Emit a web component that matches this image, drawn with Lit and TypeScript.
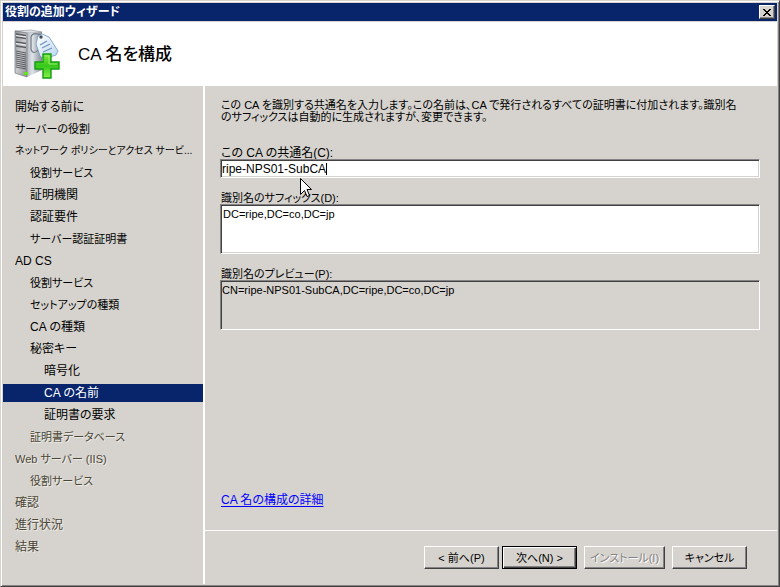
import { LitElement, html, css, svg } from "lit";
import { customElement, property, state } from "lit/decorators.js";
import { classMap } from "lit/directives/class-map.js";

interface Step {
  label: string;
  level: 0 | 1 | 2;
  size?: "small" | "tiny";
  current?: boolean;
  disabled?: boolean;
}

const STEPS: Step[] = [
  { label: "開始する前に", level: 0 },
  { label: "サーバーの役割", level: 0, size: "small" },
  { label: "ネットワーク ポリシーとアクセス サービ...", level: 0, size: "tiny" },
  { label: "役割サービス", level: 1, size: "small" },
  { label: "証明機関", level: 1 },
  { label: "認証要件", level: 1 },
  { label: "サーバー認証証明書", level: 1, size: "small" },
  { label: "AD CS", level: 0 },
  { label: "役割サービス", level: 1, size: "small" },
  { label: "セットアップの種類", level: 1, size: "small" },
  { label: "CA の種類", level: 1 },
  { label: "秘密キー", level: 1 },
  { label: "暗号化", level: 2 },
  { label: "CA の名前", level: 2, current: true },
  { label: "証明書の要求", level: 2 },
  { label: "証明書データベース", level: 1, size: "small", disabled: true },
  { label: "Web サーバー (IIS)", level: 0, size: "small", disabled: true },
  { label: "役割サービス", level: 1, size: "small", disabled: true },
  { label: "確認", level: 0, disabled: true },
  { label: "進行状況", level: 0, disabled: true },
  { label: "結果", level: 0, disabled: true },
];

@customElement("server-role-icon")
export class ServerRoleIcon extends LitElement {
  static styles = css`
    :host { display: block; flex: none; }
    .art { display: block; }
  `;

  render() {
    const vents = [0, 1, 2, 3, 4, 5, 6, 7, 8];
    return html`<svg class="art" width="48" height="52" viewBox="0 0 48 52" aria-hidden="true">
      <defs>
        <linearGradient id="front" x1="0" y1="0" x2="1" y2="1">
          <stop offset="0" stop-color="#8f9296" /><stop offset="0.5" stop-color="#c9cbce" /><stop offset="1" stop-color="#8b8e92" />
        </linearGradient>
        <linearGradient id="side" x1="0" y1="0" x2="1" y2="0">
          <stop offset="0" stop-color="#b4b9c0" /><stop offset="0.35" stop-color="#dfe3e9" /><stop offset="1" stop-color="#848b95" />
        </linearGradient>
        <linearGradient id="tag" x1="0" y1="0" x2="1" y2="1">
          <stop offset="0" stop-color="#ffffff" /><stop offset="1" stop-color="#b9d6ef" />
        </linearGradient>
        <linearGradient id="plus" x1="0" y1="0" x2="0" y2="1">
          <stop offset="0" stop-color="#7fe63f" /><stop offset="0.5" stop-color="#35c81b" /><stop offset="1" stop-color="#8cf04f" />
        </linearGradient>
      </defs>
      <path d="M1 2 L17 1 L28 3 L13 4 Z" fill="#dfe2e6" stroke="#8b8f95" stroke-width="0.6" />
      <path d="M13 4 L28 3 L28 41 L13 48 Z" fill="url(#side)" />
      <path d="M1 2 L13 4 L13 48 L1 44 Z" fill="url(#front)" stroke="#75787d" stroke-width="0.7" />
      <path d="M2 5 L12 6.500 M2 8 L12 9.500 M2 13 L12 14.500 M2 17 L12 18.500" stroke="#595c61" stroke-width="1.400" />
      <path d="M2 6.500 L12 8 M2 14.500 L12 16" stroke="#eceef0" stroke-width="1" />
      ${vents.map((n) => svg`<path d=${`M2 ${22 + n * 2} L12 ${24 + n * 2}`} stroke="#505359" stroke-width="0.9" />`)}
      <rect x="10" y="43" width="4" height="3" fill="#62e31c" />
      <path d="M29 8 C24 3 18 4 17 8 L17 20 C18 25 22 24 24 21" fill="none" stroke="#747c87" stroke-width="1.200" />
      <path d="M24 7 L28 5 L35 8 L44 22 L42 26 L30 30 L26 27 L22 15 Z" fill="url(#tag)" stroke="#7196bf" stroke-width="0.8" />
      <circle cx="27" cy="8" r="1.700" fill="#454b56" />
      <path d="M26 16 L33 12 M28 19 L36 15 M29 23 L38 19" stroke="#6f91ba" stroke-width="1.200" />
      <path d="M29 25 H37 V33 H45 V40 H37 V49 H29 V40 H21 V33 H29 Z" fill="url(#plus)" stroke="#159c12" stroke-width="1.400" />
      <path d="M31 27 H35 V35 H43" fill="none" stroke="#b6f58c" stroke-width="1" opacity="0.7" />
    </svg>`;
  }
}

@customElement("wizard-steps")
export class WizardSteps extends LitElement {
  @property({ attribute: false }) steps: Step[] = [];

  static styles = css`
    :host { display: block; }
    .list {
      list-style: none;
      margin: 0;
      padding: 12px 0 0;
      display: flex;
      flex-direction: column;
      gap: 4px;
    }
    .step {
      line-height: 18px;
      padding: 0 8px 0 12px;
      white-space: nowrap;
    }
    .small { font-size: 11px; }
    .tiny { font-size: 10px; }
    .level-1 { padding-left: 27px; }
    .level-2 { padding-left: 41px; }
    .current { background: #08246b; color: #fff; }
    .disabled { color: #4a4636; text-shadow: 1px 1px #efede8; }
  `;

  render() {
    return html`<ol class="list">
      ${this.steps.map(
        (s) => html`<li
          class=${classMap({
            step: true,
            small: s.size === "small",
            tiny: s.size === "tiny",
            "level-1": s.level === 1,
            "level-2": s.level === 2,
            current: !!s.current,
            disabled: !!s.disabled,
          })}
          aria-current=${s.current ? "step" : "false"}
        >${s.label}</li>`
      )}
    </ol>`;
  }
}

@customElement("app-root")
export class AppRoot extends LitElement {
  @state() private commonName = "ripe-NPS01-SubCA";
  @state() private suffix = "DC=ripe,DC=co,DC=jp";

  static styles = css`
    :host {
      display: block;
      font: 12px/12px "Liberation Sans", "Noto Sans CJK JP", sans-serif;
      font-feature-settings: "palt";
      color: #000;
    }
    .window {
      box-sizing: border-box;
      min-height: 100vh;
      display: flex;
      flex-direction: column;
      background: #d6d3ce;
      border: 1px solid;
      border-color: #d6d3ce #424142 #424142 #d6d3ce;
      box-shadow: inset 1px 1px #fff, inset -1px -1px #848284;
      padding: 2px;
    }
    .titlebar {
      display: flex;
      align-items: center;
      justify-content: space-between;
      height: 18px;
      padding: 0 2px;
      background: #08246b;
      color: #fff;
    }
    .title { margin: 0; font-size: 12px; font-weight: 700; }
    .close {
      display: grid;
      place-items: center;
      width: 16px;
      height: 14px;
      padding: 0;
    }
    .banner {
      box-sizing: border-box;
      display: flex;
      align-items: center;
      gap: 16px;
      height: 64px;
      margin-top: 1px;
      padding: 2px 0 0 11px;
      background: #fff;
    }
    .heading { margin: 0; font-size: 17px; line-height: 20px; font-weight: 500; }
    .body { flex: 1; display: grid; grid-template-columns: 200px 1fr; }
    .side { border-right: 2px solid #fff; width: 200px; }
    .main { display: flex; flex-direction: column; margin-left: 2px; min-width: 0; }
    .content {
      flex: 1;
      display: flex;
      flex-direction: column;
      padding: 13px 17px 0 15px;
    }
    .intro { margin: 0 0 0 1px; font-size: 11px; }
    .field { display: flex; flex-direction: column; position: relative; }
    .name { margin-top: 24px; }
    .suffix, .preview { margin-top: 14px; }
    .label { line-height: 12px; margin: 0 0 0 1px; }
    .small { font-size: 11px; }
    .box {
      box-sizing: border-box;
      width: 100%;
      margin: 0;
      padding: 2px 0;
      font: inherit;
      font-feature-settings: inherit;
      color: inherit;
      background: #fff;
      border: 1px solid;
      border-color: #848284 #fff #fff #848284;
      border-radius: 0;
      box-shadow: inset 1px 1px #424142, inset -1px -1px #d6d3ce;
      outline: none;
      resize: none;
      overflow: hidden;
    }
    .single { height: 19px; padding-left: 1px; }
    .area { height: 50px; padding: 3px 2px; display: block; font-size: 11px; }
    .readonly { background: #d6d3ce; padding-left: 1px; }
    .caret { position: absolute; left: 106px; bottom: 3px; width: 1px; height: 12px; background: #000; }
    .pointer { position: absolute; left: 80px; top: 31px; z-index: 1; pointer-events: none; }
    .more { margin: auto 0 24px 1px; align-self: flex-start; color: #00f; text-decoration: underline; text-underline-offset: 2px; }
    .actions {
      display: flex;
      justify-content: flex-end;
      border-top: 1px solid #fff;
      padding: 15px 30px;
    }
    .button, .close {
      box-sizing: border-box;
      font: inherit;
      font-feature-settings: inherit;
      color: #000;
      background: #d6d3ce;
      border: 1px solid;
      border-color: #fff #424142 #424142 #fff;
      border-radius: 0;
      box-shadow: inset -1px -1px #848284;
    }
    .button { width: 75px; height: 23px; padding: 0; font-size: 11px; white-space: nowrap; }
    .next {
      margin: 0 7px 0 3px;
      border-color: #000;
      box-shadow: inset 1px 1px #fff, inset -1px -1px #424142, inset -2px -2px #848284;
    }
    .install { width: 81px; margin-right: 7px; }
    .install:disabled { color: #848284; text-shadow: 1px 1px #fff; }
  `;

  render() {
    return html`<div class="window">
      <header class="titlebar">
        <h1 class="title">役割の追加ウィザード</h1>
        <button class="close" aria-label="閉じる">
          <svg width="8" height="7" viewBox="0 0 8 7" shape-rendering="crispEdges" aria-hidden="true">
            <path d="M0 0h2v1h1v1h2v-1h1v-1h2v1h-1v1h-1v1h-1v1h1v1h1v1h1v1h-2v-1h-1v-1h-2v1h-1v1h-2v-1h1v-1h1v-1h1v-1h-1v-1h-1v-1h-1z" />
          </svg>
        </button>
      </header>
      <div class="banner">
        <server-role-icon></server-role-icon>
        <h2 class="heading">CA 名を構成</h2>
      </div>
      <div class="body">
        <nav class="side"><wizard-steps .steps=${STEPS}></wizard-steps></nav>
        <main class="main">
          <div class="content">
            <p class="intro">この CA を識別する共通名を入力します。この名前は、CA で発行されるすべての証明書に付加されます。識別名<br />のサフィックスは自動的に生成されますが、変更できます。</p>
            <div class="field name">
              <label class="label" for="cn">この CA の共通名(C):</label>
              <input class="box single" id="cn" type="text" .value=${this.commonName}
                @input=${(e: Event) => (this.commonName = (e.target as HTMLInputElement).value)} />
              <span class="caret"></span>
              <svg class="pointer" width="13" height="20" viewBox="0 0 13 20" aria-hidden="true">
                <path d="M0.5 0.5 V16.500 L4.500 12.500 L7 18.500 L9.500 17.500 L7 11.500 H11.500 Z" fill="#fff" stroke="#000" />
              </svg>
            </div>
            <div class="field suffix">
              <label class="label small" for="dn">識別名のサフィックス(D):</label>
              <textarea class="box area" id="dn" .value=${this.suffix}
                @input=${(e: Event) => (this.suffix = (e.target as HTMLTextAreaElement).value)}></textarea>
            </div>
            <div class="field preview">
              <label class="label small" for="pv">識別名のプレビュー(P):</label>
              <textarea class="box area readonly" id="pv" readonly .value=${`CN=${this.commonName},${this.suffix}`}></textarea>
            </div>
            <a class="more" href="#details">CA 名の構成の詳細</a>
          </div>
          <footer class="actions">
            <button class="button">&lt; 前へ(P)</button>
            <button class="button next">次へ(N) &gt;</button>
            <button class="button install" disabled>インストール(I)</button>
            <button class="button">キャンセル</button>
          </footer>
        </main>
      </div>
    </div>`;
  }
}
